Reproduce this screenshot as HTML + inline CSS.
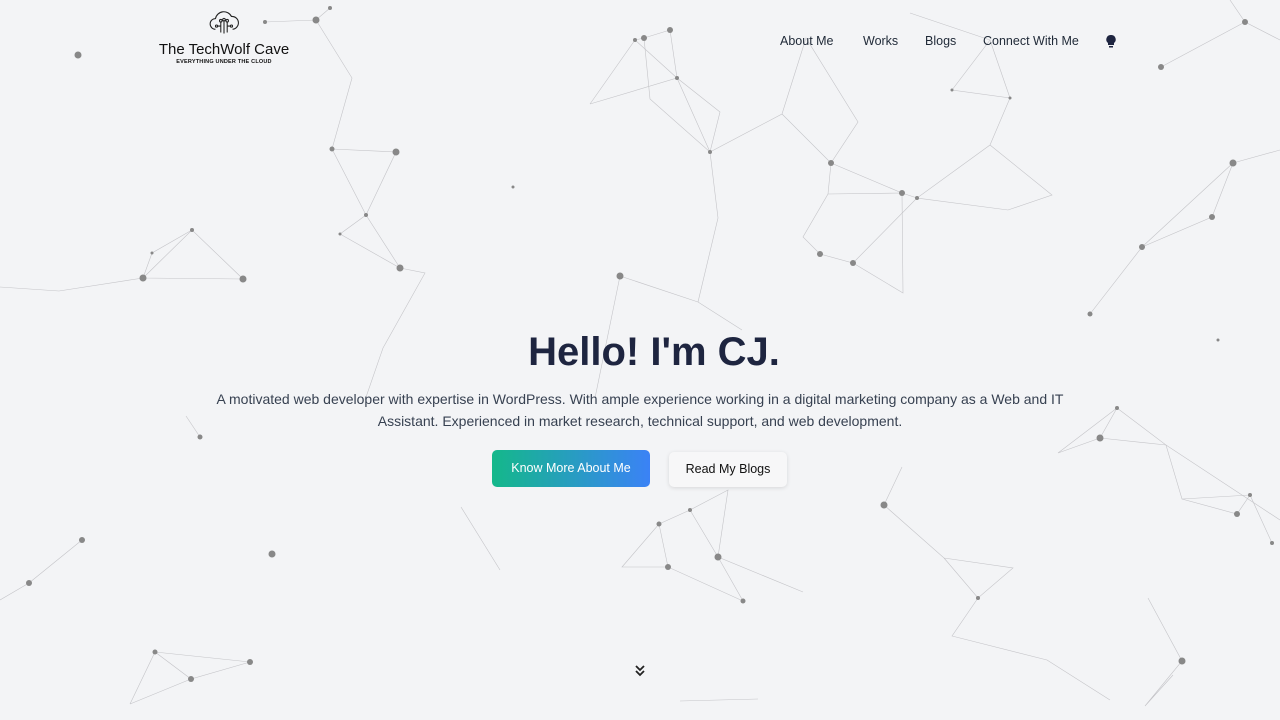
<!DOCTYPE html>
<html><head><meta charset="utf-8"><style>
*{margin:0;padding:0;box-sizing:border-box}
body{width:1280px;height:720px;background:#f3f4f6;font-family:"Liberation Sans",sans-serif;position:relative;overflow:hidden;color:#1f2937}
svg.bg{position:absolute;left:0;top:0}
.logo{position:absolute;left:153px;top:10px;width:142px;text-align:center}
.logo .t{font-size:15px;color:#111;margin-top:-4px}
.logo .s{font-size:5.5px;font-weight:bold;letter-spacing:0.2px;color:#111;margin-top:1px}
nav{position:absolute;top:34px;left:780px;font-size:12.5px;color:#1f2937}
nav span{position:absolute;white-space:nowrap}
h1{position:absolute;top:330px;left:14px;width:1280px;text-align:center;font-size:40px;font-weight:bold;color:#1e2540}
p{position:absolute;top:388px;left:210px;width:860px;text-align:center;font-size:14px;line-height:22px;color:#374151}
.b1{position:absolute;left:492px;top:450px;width:158px;height:37px;border-radius:5px;background:linear-gradient(90deg,#14b88a,#3b82f6);color:#fff;font-size:12.5px;text-align:center;line-height:37px}
.b2{position:absolute;left:669px;top:452px;width:118px;height:35px;border-radius:5px;background:#f7f7f8;box-shadow:0 1px 4px rgba(0,0,0,.12);color:#111;font-size:12.5px;text-align:center;line-height:35px}
.chev{position:absolute;left:634px;top:664px}
</style></head><body>
<svg class="bg" width="1280" height="720" stroke="#c4c4c8" stroke-width="0.6" fill="#888">
<g fill="none">
<polyline points="265,22 316,20 330,8"/><polyline points="316,20 352,78 332,149 396,152 366,215 340,234 400,268 425,273 383,348 365,400"/><polyline points="332,149 366,215 400,268"/>
<polyline points="143,278 192,230 243,279 143,278 152,253 192,230"/><polyline points="0,287 59,291 143,278"/>
<polyline points="590,104 635,40 644,38 670,30 677,78 710,152 718,218 698,302"/><polyline points="590,104 677,78 720,112 710,152 650,99 644,38"/><polyline points="635,40 677,78"/>
<polyline points="710,152 782,114 806,38 858,122 831,163 902,193 917,198 853,263 820,254 803,237 828,194 831,163"/><polyline points="782,114 831,163"/><polyline points="828,194 902,193 903,293 853,263"/>
<polyline points="910,13 990,40 952,90 1010,98 990,145 917,198 1008,210 1052,195 990,145"/><polyline points="990,40 1010,98"/>
<polyline points="1230,0 1245,22 1280,40"/><polyline points="1161,67 1245,22"/>
<polyline points="1142,247 1233,163 1212,217 1142,247 1090,314"/><polyline points="1233,163 1280,150"/>
<polyline points="1117,408 1100,438 1058,453 1117,408 1166,445 1182,499 1237,514 1250,495 1272,543"/><polyline points="1100,438 1166,445 1280,520"/><polyline points="1182,499 1250,495"/>
<polyline points="620,276 698,302 742,330"/><polyline points="620,276 595,398"/>
<polyline points="659,524 690,510 728,490 718,557 743,601 668,567 622,567 659,524 668,567"/><polyline points="690,510 718,557 803,592"/><polyline points="461,507 500,570"/>
<polyline points="884,505 944,558 1013,568 978,598 944,558"/><polyline points="884,505 902,467"/><polyline points="978,598 952,636 1047,660 1110,700"/>
<polyline points="1148,598 1182,661 1145,706 1173,675"/>
<polyline points="130,704 155,652 191,679 250,662 155,652"/><polyline points="191,679 130,704"/>
<polyline points="29,583 82,540"/><polyline points="0,600 29,583"/><polyline points="186,416 200,437"/>
<polyline points="680,701 758,699"/>
</g>
<g stroke="none">
<circle cx="78" cy="55" r="3.5"/><circle cx="316" cy="20" r="3.5"/><circle cx="330" cy="8" r="2"/><circle cx="265" cy="22" r="2"/>
<circle cx="332" cy="149" r="2.5"/><circle cx="396" cy="152" r="3.5"/><circle cx="366" cy="215" r="2"/><circle cx="400" cy="268" r="3.5"/><circle cx="340" cy="234" r="1.5"/>
<circle cx="143" cy="278" r="3.5"/><circle cx="243" cy="279" r="3.5"/><circle cx="192" cy="230" r="2"/><circle cx="152" cy="253" r="1.5"/><circle cx="513" cy="187" r="1.5"/>
<circle cx="644" cy="38" r="3"/><circle cx="670" cy="30" r="3"/><circle cx="635" cy="40" r="2"/><circle cx="677" cy="78" r="2"/><circle cx="710" cy="152" r="2"/>
<circle cx="831" cy="163" r="3"/><circle cx="902" cy="193" r="3"/><circle cx="917" cy="198" r="2"/><circle cx="853" cy="263" r="3"/><circle cx="820" cy="254" r="3"/>
<circle cx="952" cy="90" r="1.5"/><circle cx="1010" cy="98" r="1.5"/><circle cx="1161" cy="67" r="3"/><circle cx="1245" cy="22" r="3"/>
<circle cx="1233" cy="163" r="3.5"/><circle cx="1212" cy="217" r="3"/><circle cx="1142" cy="247" r="3"/><circle cx="1090" cy="314" r="2.5"/><circle cx="1218" cy="340" r="1.5"/>
<circle cx="620" cy="276" r="3.5"/><circle cx="1100" cy="438" r="3.5"/><circle cx="1117" cy="408" r="2"/><circle cx="1237" cy="514" r="3"/><circle cx="1250" cy="495" r="2"/><circle cx="1272" cy="543" r="2"/>
<circle cx="884" cy="505" r="3.5"/><circle cx="718" cy="557" r="3.5"/><circle cx="668" cy="567" r="3"/><circle cx="659" cy="524" r="2.5"/><circle cx="743" cy="601" r="2.5"/><circle cx="690" cy="510" r="2"/>
<circle cx="978" cy="598" r="2"/><circle cx="1182" cy="661" r="3.5"/><circle cx="272" cy="554" r="3.5"/><circle cx="82" cy="540" r="3"/><circle cx="29" cy="583" r="3"/><circle cx="200" cy="437" r="2.5"/>
<circle cx="155" cy="652" r="2.5"/><circle cx="191" cy="679" r="3"/><circle cx="250" cy="662" r="3"/>
</g>
</svg>
<div class="logo">
<svg width="32" height="30" viewBox="0 0 30 28" fill="none" stroke="#222" stroke-width="1"><path d="M7 18 a5 5 0 0 1 0-10 a8 8 0 0 1 15-2 a6 6 0 0 1 1 12"/><path d="M12 11v10M15 10v12M18 11v10M9 15h3M18 15h3"/><circle cx="12" cy="10" r="1.2"/><circle cx="15" cy="9" r="1.2"/><circle cx="18" cy="10" r="1.2"/><circle cx="8" cy="15" r="1"/><circle cx="22" cy="15" r="1"/></svg>
<div class="t">The TechWolf Cave</div>
<div class="s">EVERYTHING UNDER THE CLOUD</div>
</div>
<nav><span style="left:0">About Me</span><span style="left:83px">Works</span><span style="left:145px">Blogs</span><span style="left:203px">Connect With Me</span>
<svg style="position:absolute;left:326px;top:1px" width="10" height="13" viewBox="0 0 10 13"><path d="M5 0a4.5 4.5 0 0 0-3 8v2h6V8a4.5 4.5 0 0 0-3-8z" fill="#1e2540"/><rect x="3" y="11" width="4" height="1.5" fill="#1e2540"/></svg></nav>
<h1>Hello! I'm CJ.</h1>
<p>A motivated web developer with expertise in WordPress. With ample experience working in a digital marketing company as a Web and IT Assistant. Experienced in market research, technical support, and web development.</p>
<div class="b1">Know More About Me</div>
<div class="b2">Read My Blogs</div>
<svg class="chev" width="12" height="14" viewBox="0 0 12 14" fill="none" stroke="#222" stroke-width="1.8"><path d="M2 2l4 4 4-4M2 7l4 4 4-4"/></svg>
</body></html>
